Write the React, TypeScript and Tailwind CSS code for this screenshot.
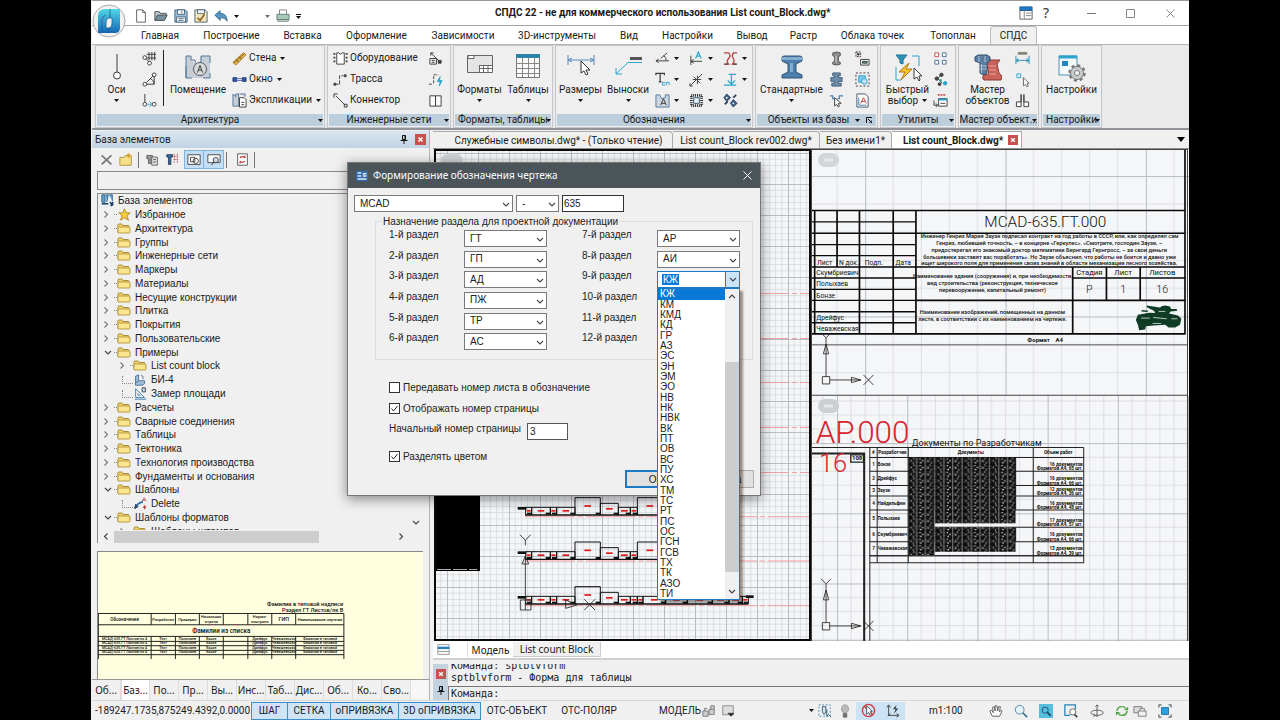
import React, { useState } from "react";

type Kids = { children?: React.ReactNode };

/* ---------- icon primitives ---------- */

function Ic({ c = "size-4", v = "0 0 16 16", children }: Kids & { c?: string; v?: string }) {
  return (
    <svg viewBox={v} className={`${c} shrink-0`} fill="none" stroke="#3c3c3c" strokeWidth="1" aria-hidden="true">
      {children}
    </svg>
  );
}

function Caret({ c = "" }: { c?: string }) {
  return (
    <svg viewBox="0 0 5 3" className={`h-[3px] w-[5px] shrink-0 ${c}`} aria-hidden="true">
      <path d="M0 0h5L2.5 3z" fill="#111" />
    </svg>
  );
}

function Chevron({ c = "" }: { c?: string }) {
  return (
    <svg viewBox="0 0 8 5" className={`h-[5px] w-2 shrink-0 ${c}`} aria-hidden="true">
      <path d="M1 1l3 3 3-3" fill="none" stroke="#444" strokeWidth="1.1" />
    </svg>
  );
}

const BLUE = "#2aa5cf";

const icons: Record<string, React.ReactNode> = {
  axis: (
    <Ic c="h-[26px] w-[10px]" v="0 0 10 26">
      <path d="M5 0v18" />
      <circle cx="5" cy="21.500" r="3.500" fill="#fff" />
    </Ic>
  ),
  axisGrid: (
    <Ic>
      <path d="M5 3.500h10M5 7.500h10M7.500 1v9M10.500 1v9M13.500 1v9M4 8l4 4" />
      <circle cx="3" cy="7" r="2" fill="#fff" />
      <circle cx="8" cy="13" r="2" fill="#fff" />
    </Ic>
  ),
  axisArc: (
    <Ic>
      <path d="M4 13h9V4M5 11l7-7M9 7q4 2 4 6" />
      <circle cx="3" cy="13" r="2" fill="#fff" />
      <circle cx="13" cy="3" r="2" fill="#fff" />
    </Ic>
  ),
  axisShift: (
    <Ic>
      <path d="M3 1v9" />
      <path d="M6 12h4M8 9l3 3-3 3" stroke={BLUE} />
      <circle cx="3" cy="12" r="2" fill="#fff" />
      <circle cx="13" cy="12" r="2" fill="#fff" />
    </Ic>
  ),
  room: (
    <Ic c="size-[26px]" v="0 0 26 26">
      <path d="M1 2l5 0 0 4 5 4 4-2 1-6h9v22H1z" fill="#c5cdd6" stroke="none" />
      <path d="M1 24V2h5M6 2v4h4M10 6q0 5 4 5M16 8V2h9v7M1 12v12h6M25 19v5h-7" stroke="#53789b" />
      <circle cx="15" cy="15" r="6.500" fill="#d6d9dc" stroke="#555" />
      <path d="M12.500 18.500l2.500-7 2.500 7M13.500 16h3" />
    </Ic>
  ),
  wall: (
    <Ic>
      <path d="M1 12L12 2l3 2L4 15z" fill="#e9b64a" stroke="#a87a28" />
      <path d="M2 13L13 3M5 9l2 3M8 6l2 3" stroke="#7d5c1d" />
    </Ic>
  ),
  window: (
    <Ic>
      <path d="M1 6h4v4H1zM11 6h4v4h-4z" fill="#37549a" stroke="#29437f" />
      <path d="M5 7h6M5 9h6" stroke="#4d6bb5" />
    </Ic>
  ),
  expl: (
    <Ic>
      <path d="M1 1v13h6V1H4v3zM8 1h6v3" fill="#c5cdd6" stroke="#53789b" />
      <path d="M8 5h5l2 2v8H8z" fill="#fff" />
      <path d="M10 10h3M10 12.500h3" />
    </Ic>
  ),
  equip: (
    <Ic>
      <path d="M4 2h2q2 3 4 0h2v12H4z" fill="#fff" />
      <path d="M1.500 2v12M14.500 2v12" strokeDasharray="2 2" strokeWidth="2" />
    </Ic>
  ),
  route: (
    <Ic>
      <path d="M2 13h4M7 13V4h4" strokeDasharray="4 1.500" />
      <path d="M1 12h2v2H1zM12 3h2v2h-2z" fill="#555" />
    </Ic>
  ),
  connector: (
    <Ic>
      <path d="M3 3l10 10" />
      <path d="M1 5V1h4M12 12h3v3h-3z" />
    </Ic>
  ),
  connBox: (
    <Ic>
      <path d="M2 8h7v6H2zM4 10h3M4 12h3M3 2l9 9M3 5V2h3" />
      <path d="M11 10h3v3h-3z" fill="#444" />
    </Ic>
  ),
  routeBolt: (
    <Ic>
      <path d="M1 13h4M6 12V3h5" strokeDasharray="3 1.500" />
      <path d="M13 5l-3 5h3l-1 5 3-6h-3z" fill={BLUE} stroke={BLUE} />
    </Ic>
  ),
  panels: (
    <Ic>
      <path d="M2 3h6v11H2zM8 3h6v11H8z" fill="#fafafa" />
    </Ic>
  ),
  format: (
    <Ic c="h-[20px] w-[26px]" v="0 0 26 20">
      <path d="M.5 1.500h25v17H.5z" fill="#e4e4e4" stroke="#666" />
      <path d="M1 1.500h6v3H1z" fill="#fff" stroke="#666" />
      <path d="M12 11.500h13v6.500H12z" fill="#fff" stroke="none" />
      <path d="M12 11.500h13M12.500 11v7M12 14.500h13M16.500 11v7M21 11v7" stroke="#666" />
    </Ic>
  ),
  table: (
    <Ic c="h-[24px] w-[26px]" v="0 0 26 24">
      <path d="M1.500.5h23v23h-23z" fill="#fbfbfb" stroke="#777" />
      <path d="M1 0h24v4H1z" fill="#2d83a8" stroke="none" />
      <path d="M2 9.500h22M2 14.500h22M2 19.500h22M7.500 4v19M13.500 4v19M19.500 4v19" stroke="#888" />
    </Ic>
  ),
  dims: (
    <Ic c="h-[22px] w-[28px]" v="0 0 28 22">
      <path d="M1 1v10M27 1v10M1 6h26M5 4L1 6l4 2M23 4l4 2-4 2" stroke="#5a87b8" />
      <path d="M14 7v12l3-2 2 4 2-1-2-4h4z" fill="#fff" stroke="#333" />
    </Ic>
  ),
  leader: (
    <Ic c="h-[22px] w-[28px]" v="0 0 28 22">
      <path d="M16 3h12v3H16z" fill="#555" stroke="none" />
      <path d="M28 8.500H14L2 20M2 14v6h6" stroke={BLUE} />
    </Ic>
  ),
  angle: (
    <Ic>
      <path d="M1 10.500h14M6 8L13 2M9 5q3 1 3 5M4 8.500l-3 2 3 2" />
    </Ic>
  ),
  dimA: (
    <Ic>
      <path d="M2 5v10M2 11h12M5 9l-3 2 3 2" />
      <path d="M7 8l3-7 3 7M8 5.500h4" stroke={BLUE} strokeWidth="1.200" />
    </Ic>
  ),
  breakLine: (
    <Ic>
      <path d="M1 2h5q3 3 0 6t0 6H1M15 2h-4q-2 3 0 6t-1 6h4" stroke="#b5423f" strokeWidth="1.400" />
      <path d="M2 14h3M11 14h4" stroke="#444" strokeWidth="1.400" />
    </Ic>
  ),
  textSp: (
    <Ic>
      <path d="M1 3.500V1.500h9v2M5.500 1.500v9M4 10.500h3" strokeWidth="1.300" />
      <path d="M11 11H8v3h3M12 14v-3h3v3" stroke={BLUE} />
    </Ic>
  ),
  crossMark: (
    <Ic>
      <path d="M1 15L14 2M5 5l7 7M4 8h9M9 4v9M1 12v3h3" />
    </Ic>
  ),
  level: (
    <Ic>
      <path d="M6 2.500h8M9 3v10M5 9l4 4 4-4M1 14h13" stroke={BLUE} strokeWidth="1.300" />
    </Ic>
  ),
  zoneA: (
    <Ic>
      <path d="M1 2v13h14V2h-4v3l-4 1-2-4z" fill="#cdd6de" stroke="#53789b" />
      <path d="M6 13l3-7 3 7M7 11h4" />
    </Ic>
  ),
  hatch: (
    <Ic>
      <path d="M2.500 2.500h11v11h-11z" stroke="#222" strokeWidth="3" strokeDasharray="1 1" />
      <path d="M5 5h6v6H5z" fill="#e8f0fa" stroke="#356" />
    </Ic>
  ),
  nodes: (
    <Ic>
      <path d="M4 1l4 4-4 4-3-4zM11 7l4 4-4 4-3-4z" fill="#3e5f86" stroke="#2b4566" />
      <path d="M2 12l3-3M11 5l3-3" stroke="#2b4566" strokeWidth="2" />
      <circle cx="4" cy="5" r="1" fill="#fff" stroke="none" />
      <circle cx="11" cy="11" r="1" fill="#fff" stroke="none" />
    </Ic>
  ),
  beam: (
    <Ic c="h-[26px] w-[26px]" v="0 0 26 26">
      <path d="M3 3l2-1h16l2 1v4l-6 3v8l6 3v3H3v-3l6-3v-8L3 7z" fill="#4b7eaa" stroke="#2e5678" />
      <path d="M3 3h20v3H3zM11 9h3v9h-3z" fill="#83aecf" stroke="none" />
    </Ic>
  ),
  bolt: (
    <Ic>
      <path d="M4 2q4-2 8 0v3l-2 1v5l2 1v2q-4 2-8 0v-2l2-1V6L4 5z" fill="#8d8d8d" stroke="#555" />
      <path d="M7.500 5v7" stroke="#ddd" />
    </Ic>
  ),
  clamp: (
    <Ic>
      <path d="M4 1h8v3h-2v2h4v4h-4v2h3v3H3v-3h3v-2H2V6h4V4H4z" fill="#6f8daa" stroke="#3f5973" />
    </Ic>
  ),
  sectionCut: (
    <Ic>
      <path d="M1 3h3v3h3M15 3h-4v3H9" stroke="#4b7eaa" strokeWidth="1.300" />
      <path d="M6 5v9l2-2 2 3 1-1-1-3h3z" fill="#fff" />
    </Ic>
  ),
  tagBox: (
    <Ic>
      <path d="M1 1h5v5H1z" strokeDasharray="2 1" />
      <circle cx="3.500" cy="3.500" r="1" fill="#333" />
      <path d="M6 9h9v6H6z" fill="#fff" />
      <path d="M8 11h5v2H8z" fill="#4aa" />
    </Ic>
  ),
  selectBox: (
    <Ic>
      <path d="M1 1h14v14H1z" stroke="#333" strokeDasharray="2 2" />
      <path d="M4 4h7v7H4z" fill="#7cc7e6" stroke={BLUE} />
      <circle cx="10" cy="10" r="3" fill="#bfe4f3" stroke={BLUE} />
    </Ic>
  ),
  pageA: (
    <Ic>
      <path d="M2 1h9l3 3v11H2z" fill="#fff" stroke="#3f5973" />
      <path d="M6 11l3-6 3 6M7 9h4" stroke="#b5423f" />
      <path d="M4 13h8M4 5v8" stroke="#4b7eaa" />
    </Ic>
  ),
  quick: (
    <Ic c="h-[28px] w-[28px]" v="0 0 28 28">
      <path d="M2 1h11L9 6v4L6 9V6z" fill="#2c93b8" stroke="#1d7596" />
      <path d="M2 13v13h5M18 2h7v10" stroke={BLUE} />
      <path d="M15 9L5 18h6l-4 8 11-11h-6z" fill="#f7c52c" stroke="#b07a10" />
      <path d="M20 14v11l3-2 2 4 1-1-1-4h3z" fill="#fff" />
    </Ic>
  ),
  squares: (
    <Ic>
      <path d="M2 2h4v4H2z" fill="#fff" stroke="#c2504b" />
      <path d="M10 2h4v4h-4zM2 10h4v4H2zM10 10h4v4h-4z" fill="#fff" stroke="#4b6e9a" />
    </Ic>
  ),
  dots: (
    <Ic>
      <path d="M9 3L5 7l5 5" />
      <circle cx="9" cy="3" r="1.800" fill="#444" />
      <circle cx="4" cy="7" r="1.800" fill="#444" />
      <circle cx="8" cy="9" r="1.500" fill="#3a9" stroke="none" />
      <circle cx="7" cy="13" r="1.500" fill="#444" />
      <circle cx="13" cy="12" r="1.800" fill={BLUE} stroke={BLUE} />
    </Ic>
  ),
  cards: (
    <Ic>
      <path d="M5 2h8" stroke="#c2504b" strokeDasharray="2 1" strokeWidth="2" />
      <path d="M6 6h9v8H6z" fill="#fff" />
      <path d="M6 7h9" stroke={BLUE} strokeWidth="2" />
      <path d="M8 11h5M1 8v5h4M3 11l2 2-2 2" />
    </Ic>
  ),
  master: (
    <Ic c="h-[28px] w-[28px]" v="0 0 28 28">
      <path d="M12 8q2-3 5-2h9l-3 4 2 9 3 3-1 4H10q-3-2 0-5l5-1z" fill="#c8645c" stroke="#8c3833" />
      <path d="M15 12h7M15 16h7M15 20h7" stroke="#e9a29c" />
      <path d="M1 3l3-2h9l3 2v4l-3 2v10l-4 2-3-2V9L1 7z" fill="#5c7da0" stroke="#34506e" />
      <path d="M5 2v6M7.500 10v9M11 2v6M6 12h7M6 15h7" stroke="#aec4da" />
    </Ic>
  ),
  dimSmall: (
    <Ic>
      <path d="M3 1h10v3H3z" fill="#887" stroke="none" />
      <path d="M1 5v9M15 5v9M1 10h14M4 8l-3 2 3 2M12 8l3 2-3 2" stroke="#2a8fb5" />
    </Ic>
  ),
  pick: (
    <Ic>
      <path d="M2 2h4v4H2z" stroke={BLUE} />
      <path d="M9 6v9l2-2 2 3 1-1-1-3h2z" fill="#fff" stroke="#666" />
    </Ic>
  ),
  profile: (
    <Ic>
      <path d="M6.500 1.500v8h-5v5h5v-13M9.500 1.500v8h5v5h-5v-13z" fill="#fff" />
    </Ic>
  ),
  settings: (
    <Ic c="h-[28px] w-[28px]" v="0 0 28 28">
      <path d="M1 2h18v19H1z" fill="#f6f9fb" stroke="#4d91b0" />
      <path d="M1 1.500h18v3H1z" fill={BLUE} stroke="none" />
      <path d="M4 7h6v5H4z" fill="#1f87c4" stroke="none" />
      <circle cx="19" cy="19" r="7.500" stroke="#777" strokeWidth="2.500" strokeDasharray="3 2.900" />
      <circle cx="19" cy="19" r="6.500" fill="#c9ccce" stroke="#777" />
      <circle cx="19" cy="19" r="2.500" fill="#fff" stroke="#777" />
    </Ic>
  ),
  file: (
    <Ic>
      <path d="M3 1h7l3 3v11H3z" fill="#fff" stroke="#555" />
      <path d="M10 1v3h3" stroke="#555" />
    </Ic>
  ),
  open: (
    <Ic>
      <path d="M1 13V3h5l1 2h7v2" fill="#b9cbd6" stroke="#444" />
      <path d="M1 13l3-6h11l-3 6z" fill="#7892a3" stroke="#444" />
    </Ic>
  ),
  save: (
    <Ic>
      <path d="M1 1h12l2 2v12H1z" fill="#9cc0d8" stroke="#3f5f76" />
      <path d="M4 1h8v5H4zM3 9h10v6H3z" fill="#fff" stroke="#3f5f76" />
      <path d="M9 2v3M5 11h6M5 13h6" stroke="#3f5f76" />
    </Ic>
  ),
  saveAs: (
    <Ic>
      <path d="M1 1h12l2 2v12H1z" fill="#f3e3bd" stroke="#3f5f76" />
      <path d="M4 1h8v4H4z" fill="#fff" stroke="#3f5f76" />
      <path d="M4 10l3 3 5-7" stroke="#8c6c20" strokeWidth="2" />
    </Ic>
  ),
  undo: (
    <Ic>
      <path d="M1 7l6-5v3q8 0 8 9-3-5-8-4v3z" fill="#5597c0" stroke="#2c6388" />
    </Ic>
  ),
  print: (
    <Ic>
      <path d="M4 1h8v6H4z" fill="#fff" stroke="#777" />
      <path d="M1 6h14v6H1z" fill="#a8c9b8" stroke="#5f7d6e" />
      <path d="M2 12h12v2H2z" fill="#e0e6e3" stroke="#5f7d6e" />
    </Ic>
  ),
};

/* ---------- title bar and menu ---------- */

function Logo() {
  return (
    <svg viewBox="0 0 34 34" className="absolute left-0 top-1 z-10 size-[34px]" aria-label="Меню приложения" role="img">
      <defs>
        <linearGradient id="lg" x1="0" y1="0" x2="0" y2="1">
          <stop offset="0" stopColor="#4fd6e4" />
          <stop offset="1" stopColor="#1668b8" />
        </linearGradient>
      </defs>
      <circle cx="17" cy="17" r="16" fill="#f1f1f1" stroke="#aaa" />
      <path d="M13 5h15v19q0 5-5 5H6V12q0-7 7-7z" fill="url(#lg)" />
      <path d="M18 5v9M16 29v-5" stroke="#17507c" strokeWidth=".7" />
      <path d="M14 24v-5q0-5 4-5h2v5q0 5-4 5z" fill="#f1f1f1" stroke="#17507c" strokeWidth=".7" />
      <path d="M10 29V16q0-4 4-5" fill="none" stroke="#17507c" strokeWidth=".6" />
    </svg>
  );
}

function TitleBar() {
  const names = ["file", "open", "save", "saveAs", "undo"];
  const labels = ["Создать", "Открыть", "Сохранить", "Сохранить как", "Отменить"];
  return (
    <header className="relative flex h-[25px] shrink-0 items-center border-t border-[#9a9a9a] bg-white pl-[42px] pr-[14px]">
      <div className="flex items-center gap-[6px] pt-[6px]">
        {names.map((n, i) => (
          <button key={n} aria-label={labels[i]} className="[&>svg]:size-[14px]">
            {icons[n]}
          </button>
        ))}
        <Caret />
        <Caret c="ml-[20px] opacity-60" />
        <button aria-label="Печать" className="[&>svg]:size-[14px]">{icons.print}</button>
        <span className="flex flex-col items-center gap-[1px]">
          <span className="h-px w-[5px] bg-black" />
          <Caret />
        </span>
      </div>
      <h1 className="absolute left-[403px] top-[5px] whitespace-nowrap font-[Roboto,sans-serif] text-[10px] font-bold leading-[14px]">
        СПДС 22 - не для коммерческого использования List count_Block.dwg*
      </h1>
      <div className="ml-auto flex items-center text-[14px] text-[#333]">
        <button aria-label="Панели" className="mr-[10px]">
          <Ic c="size-[14px]">
            <path d="M1 5h14v10H1z" fill="#fff" stroke="#555" />
            <path d="M1 1h14v4H1z" fill="#1f78c8" stroke="#185fa0" />
            <path d="M6 5v10M8 8h6M8 11h6" stroke="#777" />
          </Ic>
        </button>
        <button aria-label="Справка" className="mr-[38px] leading-5">?</button>
        <button aria-label="Свернуть" className="mr-[30px]">
          <Ic c="size-[9px]" v="0 0 9 9"><path d="M0 4.500h9" stroke="#777" /></Ic>
        </button>
        <button aria-label="Развернуть" className="mr-[31px]">
          <Ic c="size-[9px]" v="0 0 9 9"><path d="M.5.5h8v8h-8z" stroke="#888" /></Ic>
        </button>
        <button aria-label="Закрыть">
          <Ic c="size-[9px]" v="0 0 9 9"><path d="M.5.5l8 8M8.500.5l-8 8" stroke="#888" /></Ic>
        </button>
      </div>
    </header>
  );
}

const menu: [string, string][] = [
  ["Главная", "w-[60px]"],
  ["Построение", "w-[83px]"],
  ["Вставка", "w-[59px]"],
  ["Оформление", "w-[89px]"],
  ["Зависимости", "w-[84px]"],
  ["3D-инструменты", "w-[104px]"],
  ["Вид", "w-[40px]"],
  ["Настройки", "w-[77px]"],
  ["Вывод", "w-[52px]"],
  ["Растр", "w-[51px]"],
  ["Облака точек", "w-[87px]"],
  ["Топоплан", "w-[74px]"],
];

function Menu() {
  return (
    <nav className="flex h-[19px] shrink-0 items-end border-t border-[#a5a5a5] bg-white pl-[38px] font-[Roboto,sans-serif] text-[10px]">
      {menu.map(([m, w]) => (
        <button key={m} className={`${w} h-[18px] shrink-0 whitespace-nowrap pt-px text-center`}>
          {m}
        </button>
      ))}
      <button className="h-[18px] w-[47px] rounded-t-[3px] border border-b-0 border-[#bbb] bg-[#f0f0f0]">СПДС</button>
    </nav>
  );
}

/* ---------- ribbon ---------- */

function Group({ w, title, caret = true, launcher = false, children }: Kids & { w: string; title: string; caret?: boolean; launcher?: boolean }) {
  return (
    <section className={`${w} flex h-[83px] shrink-0 flex-col border border-[#c3c7cb] bg-[#efefef] px-px`}>
      <div className="flex flex-1">{children}</div>
      <div className={`relative mb-px flex h-3 items-center justify-center overflow-hidden whitespace-nowrap bg-[#bccddb] text-[10px] leading-3 ${launcher ? "pr-4" : ""}`}>
        {title}
        {caret && <Caret c={launcher ? "absolute right-4" : "absolute right-0"} />}
        {launcher && (
          <svg viewBox="0 0 6 6" className="absolute right-1 size-[6px]" aria-hidden="true">
            <path d="M.5 6V.5H6M2 2l4 4M6 3v3H3" fill="none" stroke="#111" />
          </svg>
        )}
      </div>
    </section>
  );
}

function Big({ w, icon, lines, caret = false, inline = false }: { w: string; icon: string; lines: string[]; caret?: boolean; inline?: boolean }) {
  return (
    <button className={`${w} flex shrink-0 flex-col items-center whitespace-nowrap pt-[8px] text-[10px] leading-[11px]`}>
      <span className="flex h-[30px] items-start justify-center">{icons[icon]}</span>
      {lines.map((l, i) => (
        <span key={l} className="flex items-center gap-1">
          {l}
          {inline && i === lines.length - 1 && <Caret />}
        </span>
      ))}
      {caret && <Caret c="mt-1" />}
    </button>
  );
}

function Col({ w, names, labels, carets = [] }: { w: string; names: string[]; labels?: string[]; carets?: boolean[] }) {
  return (
    <div className={`${w} flex shrink-0 flex-col gap-[5px] pt-1 text-[10px] leading-4`}>
      {names.map((n, i) => (
        <button key={n} aria-label={labels ? undefined : n} className="flex h-4 items-center gap-[2px] whitespace-nowrap [&>svg:first-child]:size-[15px]">
          {icons[n]}
          {labels && labels[i]}
          {carets[i] && <Caret c="ml-[2px]" />}
        </button>
      ))}
    </div>
  );
}

function Ribbon() {
  const t = true;
  return (
    <div className="flex h-[86px] shrink-0 gap-[2px] border-b-2 border-t border-[#909498] border-t-[#b5b5b5] bg-[#eaeaea] pl-[3px] font-[Roboto,sans-serif]">
      <Group w="w-[230px]" title="Архитектура">
        <Big w="w-[39px]" icon="axis" lines={["Оси"]} caret />
        <Col w="ml-[6px] w-[21px]" names={["axisGrid", "axisArc", "axisShift"]} />
        <div className="mt-1 h-[56px] w-px bg-[#222]" />
        <Big w="w-[68px]" icon="room" lines={["Помещение"]} />
        <Col w="w-[90px]" names={["wall", "window", "expl"]} labels={["Стена", "Окно", "Экспликации"]} carets={[t, t, t]} />
      </Group>
      <Group w="w-[124px]" title="Инженерные сети">
        <Col w="ml-[4px] w-[95px]" names={["equip", "route", "connector"]} labels={["Оборудование", "Трасса", "Коннектор"]} />
        <Col w="w-[20px]" names={["connBox", "routeBolt", "panels"]} />
      </Group>
      <Group w="w-[100px]" title="Форматы, таблицы">
        <Big w="w-[49px]" icon="format" lines={["Форматы"]} caret />
        <Big w="w-[48px]" icon="table" lines={["Таблицы"]} caret />
      </Group>
      <Group w="w-[198px]" title="Обозначения">
        <Big w="w-[47px]" icon="dims" lines={["Размеры"]} caret />
        <Big w="w-[48px]" icon="leader" lines={["Выноски"]} caret />
        <Col w="ml-[3px] w-[34px]" names={["angle", "textSp", "zoneA"]} carets={[t, t, t]} />
        <Col w="w-[34px]" names={["dimA", "crossMark", "hatch"]} carets={[t, t, t]} />
        <Col w="w-[27px]" names={["breakLine", "level", "nodes"]} carets={[t, t, false]} />
      </Group>
      <Group w="w-[123px]" title="Объекты из базы" launcher>
        <Big w="w-[69px]" icon="beam" lines={["Стандартные"]} caret />
        <Col w="ml-[3px] w-[26px]" names={["bolt", "clamp", "sectionCut"]} />
        <Col w="w-[20px]" names={["tagBox", "selectBox", "pageA"]} />
      </Group>
      <Group w="w-[76px]" title="Утилиты">
        <Big w="w-[51px]" icon="quick" lines={["Быстрый", "выбор"]} inline />
        <Col w="w-[20px]" names={["squares", "dots", "cards"]} />
      </Group>
      <Group w="w-[81px]" title="Мастер объект...">
        <Big w="w-[55px]" icon="master" lines={["Мастер", "объектов"]} />
        <Col w="w-[20px]" names={["dimSmall", "pick", "profile"]} />
      </Group>
      <Group w="w-[61px]" title="Настройки">
        <Big w="w-[57px]" icon="settings" lines={["Настройки"]} />
      </Group>
    </div>
  );
}

/* ---------- left panel ---------- */

function RedX({ c = "size-[11px]" }: { c?: string }) {
  return (
    <button aria-label="Закрыть" className={`${c} shrink-0 bg-[#c8504f]`}>
      <svg viewBox="0 0 11 11" className="size-full" aria-hidden="true">
        <path d="M3.500 3.500l4 4M7.500 3.500l-4 4" stroke="#fff" strokeWidth="1.500" />
      </svg>
    </button>
  );
}

function Pin() {
  return (
    <svg viewBox="0 0 8 9" className="h-[9px] w-2 shrink-0" aria-hidden="true">
      <path d="M2.500.5h3v4h-3zM5 .5v4M.5 5.500h7M4 6v3" fill="none" stroke="#111" />
    </svg>
  );
}

function Folder() {
  return (
    <Ic c="h-[11px] w-[14px]" v="0 0 14 11">
      <path d="M1 9V2q0-1 1-1h3l1 1.500h5q1 0 1 1V9" fill="#f3d468" stroke="#a98f3b" />
      <path d="M1 10V5q0-1 1-1h10q1 0 1 1v4q0 1-1 1z" fill="#fbe58f" stroke="#b79c44" />
    </Ic>
  );
}

const treeIcons: Record<string, React.ReactNode> = {
  folder: <Folder />,
  star: (
    <Ic c="size-[13px]">
      <path d="M8 1l2 5h5l-4 3.500 2 5.500-5-3-5 3 2-5.500L1 6h5z" fill="#f8cf3a" stroke="#a67d14" />
    </Ic>
  ),
  root: (
    <Ic c="size-[13px]">
      <path d="M1 1h4v9H1zM6 1h3l-2 9M10 1h4v8" fill="#5ba4cc" stroke="#245a86" />
      <path d="M1 12h8M11 10l4 4M15 10l-3 5" stroke="#123f66" strokeWidth="2" />
    </Ic>
  ),
  part: (
    <Ic c="size-[12px]">
      <path d="M2 3l4-2v8h8v4l-3 2H2z" fill="#9cbcd9" stroke="#345f8b" />
      <path d="M6 9l-4 3M9 2l3 1v4" stroke="#345f8b" />
    </Ic>
  ),
  measure: (
    <Ic c="size-[13px]">
      <path d="M2 2v11h11zM5 8v2h3M1 15h14" stroke="#2b6ea5" />
      <path d="M10 1h4v5h-4z" fill="#cde" stroke="#234" />
    </Ic>
  ),
  del: (
    <Ic c="size-[13px]">
      <path d="M1 14q3-7 10-8" stroke="#2b6ea5" strokeWidth="2" />
      <path d="M1 14l1-5 3 3z" fill="#2b6ea5" stroke="#234" />
      <path d="M10 5l2.500-4 2.500 4M11 4h3" stroke="#b5423f" />
      <path d="M13 10v5M11 12.500h4" stroke="#b5423f" strokeWidth="1.500" />
    </Ic>
  ),
};

const tree: { t: string; l?: number; o?: boolean; i?: string }[] = [
  { t: "Избранное", i: "star" },
  { t: "Архитектура" },
  { t: "Группы" },
  { t: "Инженерные сети" },
  { t: "Маркеры" },
  { t: "Материалы" },
  { t: "Несущие конструкции" },
  { t: "Плитка" },
  { t: "Покрытия" },
  { t: "Пользовательские" },
  { t: "Примеры", o: true },
  { t: "List count block", l: 1 },
  { t: "БИ-4", l: 2, i: "part" },
  { t: "Замер площади", l: 2, i: "measure" },
  { t: "Расчеты" },
  { t: "Сварные соединения" },
  { t: "Таблицы" },
  { t: "Тектоника" },
  { t: "Технология производства" },
  { t: "Фундаменты и основания" },
  { t: "Шаблоны", o: true },
  { t: "Delete", l: 2, i: "del" },
  { t: "Шаблоны форматов", o: true },
  { t: "Шаблоны штампов", l: 1 },
];

function Tree() {
  return (
    <ul className="grid h-[344px] auto-rows-fr font-['Liberation_Sans',sans-serif] text-[10px] leading-[13px]">
      <li className="flex items-center gap-[4px] pl-[3px]">
        {treeIcons.root} База элементов
      </li>
      {tree.map(({ t, l = 0, o, i = "folder" }) => (
        <li key={t} className={l ? "flex items-center pl-[22px]" : "flex items-center pl-[6px]"}>
          {l === 2 ? (
            <span className="ml-[2px] h-2 w-[11px] border-b border-l border-dotted border-[#888]" />
          ) : (
            <span className="flex w-[10px] justify-start">
              <Chevron c={o ? "" : "-rotate-90 -ml-[2px] opacity-70"} />
            </span>
          )}
          {l !== 2 && <span className="w-[3px] border-b border-dotted border-[#888]" />}
          <span className="mr-1 flex w-[14px] justify-center">{treeIcons[i]}</span>
          {t}
        </li>
      ))}
    </ul>
  );
}

const sheetRows = [280, 293, 307, 320];

function Preview() {
  return (
    <svg viewBox="98 552 326 128" preserveAspectRatio="xMinYMin meet" className="w-full" role="img" aria-label="Предпросмотр таблицы">
      <g transform="translate(90 545) scale(.33333)" stroke="#222" strokeWidth="3" fill="none">
        <path d="M24 206H764M24 240H764M24 275H764M24 290H764M24 303H764M24 317H764M24 330H764M764 206V343" />
        <path d="M25 206V343M184 206V240M257 206V240M329 206V240M401 206V240M475 206V240M547 206V240M619 206V240" />
        <path d="M184 275V343M257 275V343M329 275V343M401 275V343M475 275V343M547 275V343M619 275V343" />
        <g fill="#111" stroke="none" fontFamily="Roboto, sans-serif" textAnchor="middle" fontWeight="500">
          <text x="762" y="185" textAnchor="end" fontSize="17">Фамилии в типовой надписи</text>
          <text x="762" y="202" textAnchor="end" fontSize="17">Раздел ГТ Листов/лк В</text>
          <text x="104" y="229" fontSize="14">Обозначение</text>
          <text x="220" y="229" fontSize="12">Разработал</text>
          <text x="293" y="229" fontSize="12">Проверил</text>
          <text x="365" y="221" fontSize="12">Начальник</text>
          <text x="365" y="235" fontSize="12">отдела</text>
          <text x="511" y="221" fontSize="12">Нормо-</text>
          <text x="511" y="235" fontSize="12">контроль</text>
          <text x="583" y="229" fontSize="16">ГИП</text>
          <text x="692" y="229" fontSize="12">Наименование чертежа</text>
          <text x="395" y="264" fontSize="19">Фамилии из списка</text>
          {sheetRows.map((y) => (
            <g key={y} fontSize="11" transform={`translate(0 ${y + 6})`}>
              <text x="104">МСАД-635.ГТ Листов/лк 4</text>
              <text x="220">Тест</text>
              <text x="293">Полыхаев</text>
              <text x="365">Бонзе</text>
              <text x="511">Дрейфус</text>
              <text x="583">Чеважевская</text>
              <text x="692">Фамилии в типовой</text>
            </g>
          ))}
        </g>
      </g>
    </svg>
  );
}

const dockTabs = ["Об...", "Баз...", "По...", "Пр...", "Вы...", "Инс...", "Таб...", "Дис...", "Об...", "Ко...", "Сво..."];

function LeftPanel() {
  return (
    <aside className="flex w-[338px] shrink-0 flex-col border-r border-[#b5b5b5] bg-[#f0f0f0] pt-px">
      <div className="flex h-[17px] shrink-0 items-center justify-between bg-linear-to-b from-[#dbe6f1] to-[#c1d3e4] pl-[3px] pr-[3px] font-[Roboto,sans-serif] text-[10px]">
        <span>База элементов</span>
        <span className="flex items-center gap-[7px]"><Pin /><RedX /></span>
      </div>
      <div className="flex h-[22px] shrink-0 items-center gap-[5px] pl-[8px] pt-px">
        <button aria-label="Удалить"><Ic c="size-[13px]"><path d="M2 3l12 11M14 3L2 14" stroke="#777" strokeWidth="2.200" /></Ic></button>
        <button aria-label="Новая папка" className="ml-px"><Ic c="size-[14px]"><path d="M1 14V5h5l1-2h7v11z" fill="#f8e08a" stroke="#a98f3b" /><path d="M9 1l4 4M13 1L9 5M11 0v6" stroke="#d79c1c" /></Ic></button>
        <span className="h-4 w-px bg-[#777]" />
        <button aria-label="Импорт" className="ml-[2px]"><Ic c="size-[13px]"><path d="M1 3h7v4H6v6H3V7H1z" fill="#999" stroke="#555" /><path d="M7 5h7v10H7z" fill="#ddd" stroke="#555" /><path d="M9 8h3M9 11h3" /></Ic></button>
        <button aria-label="Экспорт" className="ml-[2px]"><Ic c="size-[13px]"><path d="M1 2h7v3H6v9H3V5H1z" fill="#346ca5" stroke="#234" /><path d="M10 1v12M14 1v12M10 4h4M10 8h4" stroke="#b5423f" strokeDasharray="2 1" /></Ic></button>
        <span className="flex border border-[#7fb5de] bg-[#c4dff5]">
          <button aria-label="Эскиз" className="flex h-[17px] w-[19px] items-center justify-center border-r border-[#7fb5de]"><Ic c="size-[14px]"><path d="M1 2h14v11H1z" fill="#fff" /><path d="M4 5h5v5H4z" /><circle cx="10" cy="9" r="3" /></Ic></button>
          <button aria-label="Предпросмотр" className="flex h-[17px] w-[19px] items-center justify-center"><Ic c="size-[14px]"><path d="M1 2h14v9H1z" fill="#fff" /><circle cx="10" cy="8" r="3" fill="#cde" /><path d="M8 10l-3 4" /></Ic></button>
        </span>
        <span className="-ml-[3px] h-4 w-px bg-[#777]" />
        <button aria-label="Обновить" className="ml-1"><Ic c="size-[13px]"><path d="M2 1h12v14H2z" fill="#fff" stroke="#444" /><path d="M5 6q2-3 6 0M11 3v3M11 10q-3 3-6 0M5 13v-3" stroke="#b5423f" strokeWidth="1.500" /></Ic></button>
        <span className="h-4 w-px bg-[#777]" />
      </div>
      <input aria-label="Поиск в базе" className="ml-[5px] mr-[6px] mt-px h-[19px] shrink-0 border border-[#888] bg-[#f0f0f0]" />
      <div className="ml-[5px] mr-[6px] mt-[3px] flex h-[350px] shrink-0 flex-col border-l border-t border-[#888]">
        <div className="flex min-h-0 flex-1">
          <div className="flex-1 overflow-hidden"><Tree /></div>
          <div className="flex w-[15px] flex-col items-center justify-end pb-[5px]"><Chevron /></div>
        </div>
        <div className="flex h-[13px] shrink-0 items-center pr-4">
          <Chevron c="mx-1 rotate-90" />
          <div className="h-3 w-[205px] bg-[#cdcdcd]" />
          <Chevron c="ml-auto mr-[2px] -rotate-90" />
        </div>
      </div>
      <div className="ml-[5px] mr-[6px] mt-[8px] min-h-0 flex-1 overflow-hidden border-l border-t border-[#888] bg-[#ffffdf]">
        <Preview />
      </div>
      <div className="flex h-[21px] shrink-0 border-t border-[#999] text-[10px] leading-[18px]">
        {dockTabs.map((d, i) => (
          <button key={i} className={i === 1 ? "w-[29px] border-x border-[#ddd] bg-white" : "w-[29px] border-r border-[#ddd]"}>
            {d}
          </button>
        ))}
        <span className="mb-px flex-1 bg-[#f7f7f7]" />
      </div>
    </aside>
  );
}

/* ---------- drawing area ---------- */

function Grid({ id, minor, x, y }: { id: string; minor: number; x: number; y: number }) {
  const major = minor * 5;
  return (
    <pattern id={id} width={major} height={major} patternUnits="userSpaceOnUse" x={x} y={y}>
      <rect width={major} height={major} fill="#f5f6f8" />
      {[1, 2, 3, 4].map((k) => (
        <path key={k} d={`M${k * minor} 0V${major}M0 ${k * minor}H${major}`} stroke="#d6d8dc" strokeWidth=".8" />
      ))}
      <path d={`M.5 0V${major}M0 .5H${major}`} stroke="#b9bcc1" strokeWidth="1" />
    </pattern>
  );
}

function Ucs() {
  return (
    <g fill="none" stroke="#222" strokeWidth="2.500">
      <path d="M40 -10h22v22h-22zM51 -10V-110M62 0H155M51 -108l-8 30h16zM155 0l-28 -8v16z" />
      <path d="M163 -15l30 30M193 -15l-30 30M36 -141l15 15 15 -15M51 -126v15" />
    </g>
  );
}

const bays = [
  [290, 308, 52], [308, 364, 52], [364, 383, 52], [383, 438, 52], [438, 514, 23], [514, 568, 40], [568, 604, 52], [604, 625, 52], [625, 700, 23],
];
const longBays = [
  ...bays.slice(0, 8), [625, 642, 52], [642, 710, 52], [710, 775, 52], [775, 850, 52], [850, 900, 52], [900, 940, 52], [940, 958, 52],
];

function Elevation({ dy, data }: { dy: number; data: number[][] }) {
  const end = data[data.length - 1][1];
  return (
    <g transform={`translate(0 ${dy})`} fill="none" stroke="#111" strokeWidth="3">
      <path d="M288 80H1140" stroke="#f3a0a0" strokeDasharray="150 8 16 8" />
      <path d="M266 55h26" strokeWidth="8" />
      {data.map(([a, b, t]) => (
        <g key={a}>
          <path d={`M${a} 75V${t}H${b}V75`} />
          <path d={`M${(a + b) / 2 - Math.min(10, (b - a) / 3)} ${(t + 75) / 2 - 1}h${Math.min(20, (b - a) / 1.5)}`} stroke="#e01818" strokeWidth="5" />
          <path d={`M${b - 14} 71h14`} strokeWidth="6" />
        </g>
      ))}
      <path d={`M288 75H${end}`} strokeWidth="4" />
    </g>
  );
}

function MainView() {
  return (
    <svg viewBox="435 149 377 492" preserveAspectRatio="xMinYMin slice" className="size-full" role="img" aria-label="Чертёж, основной вид">
      <defs><Grid id="g1" minor={6.2} x={448} y={153} /></defs>
      <rect x="435" y="149" width="377" height="492" fill="url(#g1)" />
      {[293, 338, 382, 427, 472].map((y) => (
        <path key={y} d={`M740 ${y}.5H811`} stroke="#f3a0a0" strokeDasharray="50 3 5 3" />
      ))}
      <rect x="436" y="470" width="45" height="101" fill="#000" />
      <path d="M438 569.500h40" stroke="#aaa" strokeDasharray="14 2" />
      <ellipse cx="453" cy="160" rx="11" ry="7" fill="#d0d2d5" />
      <g transform="translate(430 490) scale(.33333)">
        <Elevation dy={0} data={bays} />
        <Elevation dy={133} data={bays} />
        <Elevation dy={267} data={longBays} />
        <path d="M950 320h24" stroke="#111" strokeWidth="8" />
        <g fill="none" stroke="#222" strokeWidth="2.500">
          <path d="M289 360V198M289 198l-10 24h20zM274 330h32v30h-32zM410 330v25l34-10zM466 328l32 32M498 328l-32 32M273 134l16 17 16-17M289 151v15" />
        </g>
      </g>
      <rect x="436" y="150" width="375" height="490" fill="none" stroke="#0a0a0a" strokeWidth="2" />
    </svg>
  );
}

function StampView() {
  return (
    <svg viewBox="812 149 377 247" preserveAspectRatio="xMinYMin slice" className="size-full" role="img" aria-label="Чертёж, основная надпись">
      <defs><Grid id="g2" minor={28} x={866} y={176} /></defs>
      <rect x="812" y="149" width="377" height="247" fill="url(#g2)" />
      <rect x="819" y="153" width="21" height="14" rx="7" fill="#d3d5d8" />
      <path d="M825 160h9" stroke="#e6e7e9" strokeWidth="3" />
      <g transform="translate(810 145) scale(.33333)" stroke="#0a0a0a" strokeWidth="5" fill="none">
        <path d="M6 196H1127M6 365H1127M6 565H1127M1125 12V565M320 264H1127M320 196V565M17 196V565M84 196V365M151 196V565M252 196V565" />
        <path d="M6 230H320M6 264H320M6 298H320M6 331H320M6 398H320M6 432H320M6 465H320M6 499H320M6 532H320" strokeWidth="4" />
        <path d="M320 465H1127M789 365V565M789 398H1127M890 365V465M991 365V465" />
        <path d="M6 598H1134" strokeWidth="2" />
        <g fill="#111" stroke="none" fontFamily="Roboto, sans-serif" fontSize="20">
          <text x="707" y="245" textAnchor="middle" fontSize="46" fontWeight="300">MCAD-635.ГТ.000</text>
          <g textAnchor="middle" fontSize="17" fontWeight="500">
            <text x="720" y="279">Инженер Генрих Мария Заузе подписал контракт на год работы в СССР, или, как определял сам</text>
            <text x="719" y="299">Генрих, любивший точность, – в концерне «Геркулес». «Смотрите, господин Заузе, –</text>
            <text x="719" y="319">предостерегал его знакомый доктор математики Бернгард Гернгросс, – за свои деньги</text>
            <text x="720" y="340">большевики заставят вас поработать». Но Заузе объяснил, что работы не боится и давно уже</text>
            <text x="719" y="360">ищет широкого поля для применения своих знаний в области механизации лесного хозяйства.</text>
            <text x="550" y="398">Наименование здания (сооружения) и, при необходимости,</text>
            <text x="549" y="420">вид строительства (реконструкция, техническое</text>
            <text x="549" y="441">перевооружение, капитальный ремонт)</text>
            <text x="549" y="506">Наименование изображений, помещенных на данном</text>
            <text x="549" y="527">листе, в соответствии с их наименованием на чертеже.</text>
            <text x="687" y="589" fontSize="18" fontWeight="700">Формат</text>
            <text x="749" y="589" fontSize="18" fontWeight="700">А4</text>
          </g>
          <text x="24" y="358">Лист</text>
          <text x="90" y="358">N док.</text>
          <text x="167" y="358">Подп.</text>
          <text x="259" y="358">Дата</text>
          <text x="22" y="389">Скумбриевич</text>
          <text x="22" y="423">Полыхаев</text>
          <text x="22" y="457">Бонзе</text>
          <text x="22" y="525">Дрейфус</text>
          <text x="22" y="557">Чеважевская</text>
          <g textAnchor="middle" fontSize="23">
            <text x="839" y="390">Стадия</text>
            <text x="940" y="390">Лист</text>
            <text x="1057" y="390">Листов</text>
          </g>
          <g textAnchor="middle" fontSize="32" fontWeight="300">
            <text x="839" y="444">Р</text>
            <text x="940" y="444">1</text>
            <text x="1057" y="444">16</text>
          </g>
        </g>
        <g fill="#103c26" stroke="none">
          <path d="M1012 486l-2-6 40 6q6-6 16-6l14 3 4 8h16l2 5-20 2-6 8h-38l-6-10z" />
          <path d="M984 508l34-6 60 2 26 6 10 10-4 18-14 8h-20l-10-8-36 2-22 2-2 10-18 2-4-16-6-14z" />
          <path d="M1012 500l-18-2 2-4 20 2z" />
        </g>
        <path d="M994 518h26M1030 516l40 4M1028 534h26M1084 520h18M1046 498h20" stroke="#d5e2da" strokeWidth="2.500" />
        <g transform="translate(0 703)"><Ucs /></g>
      </g>
      <path d="M812.500 149V396M812 149.500H1188M1187.500 150V396M812 394.500H1188" stroke="#444" fill="none" />
    </svg>
  );
}

const devs: [string, number, number, string, string][] = [
  ["Бонзе", 202, 243, "16 документов", "Форматов А4, 65 шт."],
  ["Дрейфус", 243, 286, "16 документов", "Форматов А4, 66 шт."],
  ["Заузе", 286, 317, "12 документов", "Форматов А4, 36 шт."],
  ["Найдельфин", 317, 359, "16 документов", "Форматов А4, 48 шт."],
  ["Полыхаев", 359, 411, "17 документов", "Форматов А4, 57 шт."],
  ["Скумбриевич", 411, 454, "16 документов", "Форматов А4, 66 шт."],
  ["Чеважевская", 454, 496, "13 документов", "Форматов А4, 39 шт."],
];

function DocsView() {
  return (
    <svg viewBox="812 396 377 245" preserveAspectRatio="xMinYMin slice" className="size-full" role="img" aria-label="Чертёж, документы по разработчикам">
      <defs>
        <Grid id="g3" minor={14} x={838} y={443} />
        <pattern id="dense" width="82" height="20" patternUnits="userSpaceOnUse" x="296" y="202">
          <rect width="82" height="20" fill="#0c0c0c" />
          <path d="M16 3h4M34 4h4M64 3h4M8 10h3M42 10h4M58 11h5M14 17h4M36 16h5M68 17h4" stroke="#ddd" strokeWidth="3" />
          <path d="M0 6.500H82M0 13.500H82" stroke="#777" strokeWidth="1" />
          <path d="M80 0V20M26 0V20M52 0V20" stroke="#bbb" strokeWidth="2" />
        </pattern>
      </defs>
      <rect x="812" y="396" width="377" height="245" fill="url(#g3)" />
      <rect x="819" y="399" width="21" height="14" rx="7" fill="#cdd0d3" />
      <path d="M825 406h9" stroke="#e6e7e9" strokeWidth="3" />
      <g transform="translate(810 390) scale(.33333)" fill="none" stroke="#222" strokeWidth="3">
        <path d="M6 172H822M182 172V750M182 202H822M182 517H822M182 496H822M822 172V517M204 172V517M297 172V517M671 172V517" />
        <path d="M6 190H165V752" strokeWidth="6" />
        <path d="M125 194h38v22h-38z" strokeWidth="4" />
        {devs.map(([n, a, b, d1, d2], i) => (
          <g key={n}>
            <path d={`M182 ${b}H822`} />
            <rect x="298" y={a} width={i === 4 || i === 6 ? 78 : 322} height={b - a} fill="url(#dense)" stroke="none" />
            {(i === 4 || i === 6) && <rect x="376" y={a} width="242" height={b - a - 12} fill="url(#dense)" stroke="none" />}
            <g fill="#111" stroke="none" fontFamily="Roboto, sans-serif" fontSize="14" fontWeight="700">
              <text x="189" y={(a + b) / 2 + 5}>{i + 1}</text>
              <text x="205" y={(a + b) / 2 + 5}>{n}</text>
              <text x="819" y={b - 16} textAnchor="end">{d1}</text>
              <text x="819" y={b - 3} textAnchor="end">{d2}</text>
            </g>
          </g>
        ))}
        <g fill="#111" stroke="none" fontFamily="Roboto, sans-serif" fontSize="14" fontWeight="700" textAnchor="middle">
          <text x="193" y="192">#</text>
          <text x="250" y="192">Разработчик</text>
          <text x="484" y="192">Документы</text>
          <text x="746" y="192">Объем работ</text>
          <text x="144" y="211" fontSize="18">108</text>
        </g>
        <text x="502" y="167" textAnchor="middle" fontFamily="Roboto, sans-serif" fontSize="27" fill="#111" stroke="none">Документы по Разработчикам</text>
        <g fill="#d8242c" stroke="none" fontFamily="Roboto, sans-serif" fontWeight="300">
          <text x="20" y="158" fontSize="94">АР.000</text>
          <text x="30" y="244" fontSize="76">16</text>
        </g>
        <g transform="translate(0 706)"><Ucs /></g>
      </g>
      <path d="M812.500 396V641M1187.500 396V640M812 640.500H1188" stroke="#444" fill="none" />
    </svg>
  );
}

const docTabs: [string, string][] = [
  ["Служебные символы.dwg* - (Только чтение)", "w-[240px] pl-3"],
  ["List count_Block rev002.dwg*", "w-[147px]"],
  ["Без имени1*", "w-[72px]"],
];

function Workspace() {
  return (
    <main className="flex min-w-0 flex-1 flex-col pl-[3px]">
      <div className="flex h-[19px] shrink-0 items-stretch border-b border-[#8f8f8f] bg-[#f0f0f0] pt-[1px] font-[Roboto,sans-serif] text-[10px]">
        {docTabs.map(([d, w]) => (
          <button key={d} className={`${w} shrink-0 overflow-hidden whitespace-nowrap rounded-tr-[4px] border-r border-t border-[#aaa] text-center`}>
            {d}
          </button>
        ))}
        <div className="flex w-[130px] shrink-0 items-center justify-between border-r border-t border-[#aaa] bg-white pl-[11px] pr-[3px]">
          <button className="whitespace-nowrap font-bold">List count_Block.dwg*</button>
          <RedX c="size-[10px]" />
        </div>
        <svg viewBox="0 0 8 5" className="ml-auto mr-[4px] h-[5px] w-2 self-center" aria-hidden="true"><path d="M0 0h8L4 5z" /></svg>
      </div>
      <div className="flex min-h-0 flex-1 pl-[1px]">
        <div className="w-[377px] min-w-0 shrink-0"><MainView /></div>
        <div className="flex min-w-0 flex-1 flex-col">
          <div className="h-[247px] shrink-0"><StampView /></div>
          <div className="min-h-0 flex-1"><DocsView /></div>
        </div>
      </div>
      <div className="flex h-[19px] shrink-0 items-center border-b-2 border-[#d0d0d0] bg-white pl-[4px] text-[10px]">
        <Ic c="size-[13px]"><path d="M1 2h14v12H1z" fill="#fff" stroke="#888" /><path d="M1 6h14" stroke="#2a7fc0" strokeWidth="3" /><path d="M1 10.500h14" stroke="#888" /></Ic>
        <button className="ml-[17px] h-[15px] w-[46px] border-l border-[#ddd] leading-[14px]">Модель</button>
        <button className="h-[15px] w-[88px] whitespace-nowrap border-b border-r border-[#ccc] bg-[#f0f0f0] leading-[14px]">List count Block</button>
      </div>
      <div className="mt-[4px] flex h-[36px] shrink-0 bg-[#f0f0f0] font-['DejaVu_Sans_Mono',monospace] text-[10px]">
        <div className="flex w-[15px] shrink-0 flex-col items-center gap-[7px] bg-[#c3d2df] pt-[5px]"><RedX c="size-[10px]" /><Pin /></div>
        <div className="min-w-0 flex-1">
          <div className="flex h-[22px] flex-col justify-end overflow-hidden pb-[2px] pl-[3px] leading-[12px]">
            <p>Команда: sptblvform</p>
            <p>sptblvform - Форма для таблицы</p>
          </div>
          <input aria-label="Командная строка" defaultValue="Команда:" className="block h-[14px] w-full border-l border-t border-[#777] bg-[#f0f0f0] pl-[2px] outline-none" />
        </div>
      </div>
    </main>
  );
}

/* ---------- status bar ---------- */

const modes: [string, string][] = [
  ["ШАГ", "w-[37px]"], ["СЕТКА", "w-[44px]"], ["оПРИВЯЗКА", "w-[69px]"], ["3D оПРИВЯЗКА", "w-[83px]"],
];

function StatusBar() {
  return (
    <footer className="flex h-5 shrink-0 items-center whitespace-nowrap border-t border-[#d8d8d8] bg-[#f0f0f0] font-[Roboto,sans-serif] text-[10px]">
      <span className="w-[159px] shrink-0 pl-[3px]">-189247.1735,875249.4392,0.0000</span>
      {modes.map(([m, w]) => (
        <button key={m} className={`${w} -mr-px h-[18px] shrink-0 border border-[#3a8fcc] bg-[#cfe5f7]`}>{m}</button>
      ))}
      <button className="ml-[6px] w-[62px] shrink-0">ОТС-ОБЪЕКТ</button>
      <button className="ml-[10px] w-[62px] shrink-0">ОТС-ПОЛЯР</button>
      <button className="ml-[38px] w-[44px] shrink-0">МОДЕЛЬ</button>
      <Ic c="size-[14px]"><path d="M1 8h6v6H1zM8 6h6v6H8zM3 8V5h3M10 6V2h4v4" fill="#ccc" stroke="#777" /></Ic>
      <Ic c="ml-[6px] size-[12px]"><path d="M1 1h14v12H1z" fill="#ddd" stroke="#777" /><path d="M8 11h8l-4 4z" fill="#222" /></Ic>
      <Caret c="ml-[75px]" />
      <span className="ml-[4px] flex items-center">
        <Ic c="size-[14px]"><path d="M1 1h13v13H1z" stroke="#2a86b8" strokeDasharray="2 2" /><path d="M5 3h4v6l-2 3-2-3zM10 6v8l2-2 3 3" stroke="#356" fill="#cfe8f5" /></Ic>
        <Ic c="ml-[6px] size-[14px]"><path d="M4 6q0-5 4-5t4 5q0 2-2 4H6q-2-2-2-4z" fill="#bbb" stroke="#999" /><path d="M6 11h4v4H6z" fill="#777" stroke="#666" /></Ic>
      </span>
      <span className="ml-[4px] flex h-[18px] w-[49px] shrink-0 items-center justify-around bg-[#cce3f5]">
        <Ic c="size-[15px]"><circle cx="8" cy="8" r="6.500" stroke="#d23c3c" strokeWidth="1.500" /><path d="M3.500 3.500l9 9" stroke="#d23c3c" strokeWidth="1.500" /><path d="M6 3v9l2-2 2 3 1-1-1-3h2z" fill="#fff" stroke="#555" /></Ic>
        <Ic c="size-[14px]"><path d="M3 2v11h11M1 4l2-3 2 3M12 11l3 2-3 2M5 11l-3 3" /><path d="M12 1L8 6h3l-2 5 5-6h-3z" fill="#333" stroke="none" /></Ic>
      </span>
      <span className="ml-[24px] w-[60px] shrink-0">m1:100</span>
      <span className="flex flex-1 items-center justify-between pr-[17px]">
        <Ic c="size-[14px]"><path d="M4 14q-2-3-3-6l2-1 2 3-1-6 2-1 1 5V2h2l1 6 1-5h2l-1 6 2-2 1 1-3 6z" fill="#fff" stroke="#555" /></Ic>
        <Ic c="size-[14px]"><circle cx="6.500" cy="6.500" r="5" fill="#e4f3fb" stroke="#4b7ea0" /><path d="M10 10l5 5" stroke="#3d6f93" strokeWidth="2" /></Ic>
        <Ic c="size-[14px]"><path d="M0 0h16v16H0z" fill="#56bdde" stroke="none" /><circle cx="7" cy="7" r="3.500" stroke="#246" /><path d="M9.500 9.500l4 4" stroke="#246" strokeWidth="2" /></Ic>
        <Ic c="size-[14px]"><path d="M7 13H1V1h12v5" stroke="#2a86b8" strokeWidth="1.500" /><circle cx="10" cy="9" r="3.500" fill="#fff" stroke="#555" /><path d="M12 12l3 3" strokeWidth="2" /></Ic>
        <Ic c="size-[14px]"><ellipse cx="8" cy="10" rx="7" ry="3" stroke="#555" /><path d="M8 1v14M6 3l2-2 2 2M4 11l2 2-2 2" stroke="#555" /></Ic>
        <span className="flex items-center gap-[4px]">
          <Ic c="size-[14px]"><path d="M2 8q1-5 6-5 3 0 4 2M14 8q-1 5-6 5-3 0-4-2" stroke="#4ba63e" strokeWidth="1.600" /><path d="M15 3v4h-5zM1 13V9h5z" fill="#4ba63e" stroke="none" /></Ic>
          <Ic c="size-[14px]"><path d="M1 3h9v7H1z" fill="#ddd" stroke="#777" /><path d="M6 8h9v6H6zM8 8V5h5v3" fill="#eee" stroke="#777" /></Ic>
        </span>
        <Ic c="size-[14px]"><path d="M4 4h8v8H4z" fill="#2aa0dc" stroke="#1b72a6" /><path d="M1 4V1h3M12 1h3v3M15 12v3h-3M4 15H1v-3" stroke="#333" /></Ic>
      </span>
    </footer>
  );
}

/* ---------- dialog ---------- */

function Combo({ label, options, w }: { label: string; options: string[]; w: string }) {
  return (
    <span className={`relative mt-px flex self-start ${w}`}>
      <select
        aria-label={label}
        className="h-[17px] w-full appearance-none border border-[#7a7a7a] bg-white pl-[5px] text-[10px] leading-[14px] text-[#222]"
      >
        {options.map((o) => <option key={o}>{o}</option>)}
      </select>
      <Chevron c="pointer-events-none absolute right-[3px] top-[7px]" />
    </span>
  );
}

const codes = ["КЖ", "КМ", "КМД", "КД", "ГР", "АЗ", "ЭС", "ЭН", "ЭМ", "ЭО", "НВ", "НК", "НВК", "ВК", "ПТ", "ОВ", "ВС", "ПУ", "ХС", "ТМ", "ТС", "РТ", "ПС", "ОС", "ГСН", "ГСВ", "ТХ", "ТК", "АЗО", "ТИ"];
const left = ["ГТ", "ГП", "АД", "ПЖ", "ТР", "АС"];
const right = ["АР", "АИ"];

function OpenCombo() {
  const [value, setValue] = useState("КЖ");
  return (
    <div className="relative mt-px w-[83px]">
      <button role="combobox" aria-expanded="true" aria-controls="codes" aria-label="9-й раздел" className="flex h-[17px] w-full items-center border border-[#1e7ac4] bg-white pl-1">
        <span className="bg-[#0a78d7] px-px leading-[11px] text-white">{value}</span>
        <span className="ml-auto flex h-full w-[14px] items-center justify-center border-l border-[#1e7ac4] bg-[#cce4f7]"><Chevron /></span>
      </button>
      <div className="absolute left-0 top-[17px] z-20 flex h-[312px] w-[83px] border border-[#1e7ac4] bg-white shadow-[3px_3px_2px_rgba(0,0,0,0.4)]">
        <ul id="codes" role="listbox" className="grid flex-1 auto-rows-fr">
          {codes.map((c) => (
            <li key={c} role="option" aria-selected={c === value} onClick={() => setValue(c)} className={c === value ? "flex items-center bg-[#0a78d7] pl-[2px] leading-[10px] text-white" : "flex items-center pl-[2px] leading-[10px]"}>
              {c}
            </li>
          ))}
        </ul>
        <div className="flex w-[14px] flex-col items-center bg-[#f0f0f0] py-[5px]">
          <Chevron c="rotate-180" />
          <div className="mb-[17px] mt-auto h-[210px] w-full bg-[#cdcdcd]" />
          <Chevron />
        </div>
      </div>
    </div>
  );
}

function Check({ label, on, c }: { label: string; on: boolean; c: string }) {
  return (
    <label className={`relative flex items-center gap-[3px] ${c}`}>
      <input type="checkbox" defaultChecked={on} className="peer size-[11px] appearance-none border border-[#333] bg-white" />
      <svg viewBox="0 0 11 11" className="pointer-events-none absolute left-0 hidden size-[11px] peer-checked:block" aria-hidden="true">
        <path d="M2.500 5.500l2 2.500 4-5" fill="none" stroke="#222" />
      </svg>
      {label}
    </label>
  );
}

function Dialog() {
  return (
    <div role="dialog" aria-labelledby="dlg" className="absolute left-[256px] top-[162px] z-20 flex h-[334px] w-[414px] flex-col border border-[#777] bg-[#f0f0f0] font-['Liberation_Sans',sans-serif] text-[10px] text-[#222] shadow-[0_3px_12px_rgba(0,0,0,0.45)]">
      <div className="flex h-[25px] shrink-0 items-center bg-[#4a5459] pl-[8px] pr-[8px] text-white">
        <Ic c="size-[12px]"><path d="M0 1h16v14H0z" fill="#3568a8" stroke="none" /><path d="M2 4h5M2 8h5M2 12h12M9 5h5M9 8h5" stroke="#dfeaf6" strokeWidth="2" /></Ic>
        <h2 id="dlg" className="ml-[5px] font-['Noto_Sans',sans-serif]">Формирование обозначения чертежа</h2>
        <button aria-label="Закрыть" className="ml-auto"><Ic c="size-[9px]" v="0 0 9 9"><path d="M.5.5l8 8M8.500.5l-8 8" stroke="#fff" /></Ic></button>
      </div>
      <div className="flex gap-[3px] pl-[6px] pt-[6px]">
        <Combo label="Префикс" options={["MCAD"]} w="w-[159px]" />
        <Combo label="Разделитель" options={["-"]} w="w-[43px]" />
        <input aria-label="Номер" defaultValue="635" className="mt-px h-[17px] w-[62px] border border-[#333] bg-white pl-px" />
      </div>
      <fieldset className="ml-[27px] mr-[7px] mt-[3px] h-[145px] border border-[#dcdcdc]">
        <legend className="ml-[6px] px-px leading-[13px]">Назначение раздела для проектной документации</legend>
        <div className="mt-px grid h-[124px] grid-flow-col grid-cols-[193px_1fr] grid-rows-6 pl-[13px]">
          {left.map((v, i) => (
            <div key={v} className="flex">
              <span className="w-[75px] leading-[11px]">{i + 1}-й раздел</span>
              <Combo label={`${i + 1}-й раздел`} options={[v]} w="w-[83px]" />
            </div>
          ))}
          {[7, 8, 9, 10, 11, 12].map((n, i) => (
            <div key={n} className="flex">
              <span className="w-[75px] leading-[11px]">{n}-й раздел</span>
              {i < 2 && <Combo label={`${n}-й раздел`} options={[right[i]]} w="w-[83px]" />}
              {i === 2 && <OpenCombo />}
            </div>
          ))}
        </div>
      </fieldset>
      <div className="flex flex-1 flex-col pl-[41px] pt-[21px]">
        <Check label="Передавать номер листа в обозначение" on={false} c="h-[13px]" />
        <Check label="Отображать номер страницы" on c="mt-[8px] h-[13px]" />
        <label className="mt-[7px] flex gap-[12px] leading-[13px]">
          <span className="w-[126px] whitespace-nowrap">Начальный номер страницы</span>
          <input defaultValue="3" className="mt-[1px] h-[17px] w-[41px] border border-[#555] bg-white pl-[2px]" />
        </label>
        <Check label="Разделять цветом" on c="mt-[10px] h-[13px]" />
      </div>
      <div className="flex h-[25px] shrink-0 justify-end gap-[7px] pr-[6px]">
        <button className="h-[18px] w-[61px] border-2 border-[#1e7ac4] bg-[#e1e1e1]">ОК</button>
        <button className="h-[18px] w-[61px] border border-[#adadad] bg-[#e1e1e1]">Отмена</button>
      </div>
    </div>
  );
}

export default function App() {
  return (
    <div className="flex h-screen min-h-[720px] justify-center bg-black px-[91px] font-['Noto_Sans',sans-serif] text-[10px] text-[#1a1a1a]">
      <div className="relative flex w-full flex-col bg-[#f0f0f0] pl-px">
        <div className="relative">
          <Logo />
          <TitleBar />
        </div>
        <Menu />
        <Ribbon />
        <div className="flex min-h-0 flex-1">
          <LeftPanel />
          <Workspace />
        </div>
        <StatusBar />
        <Dialog />
      </div>
    </div>
  );
}
